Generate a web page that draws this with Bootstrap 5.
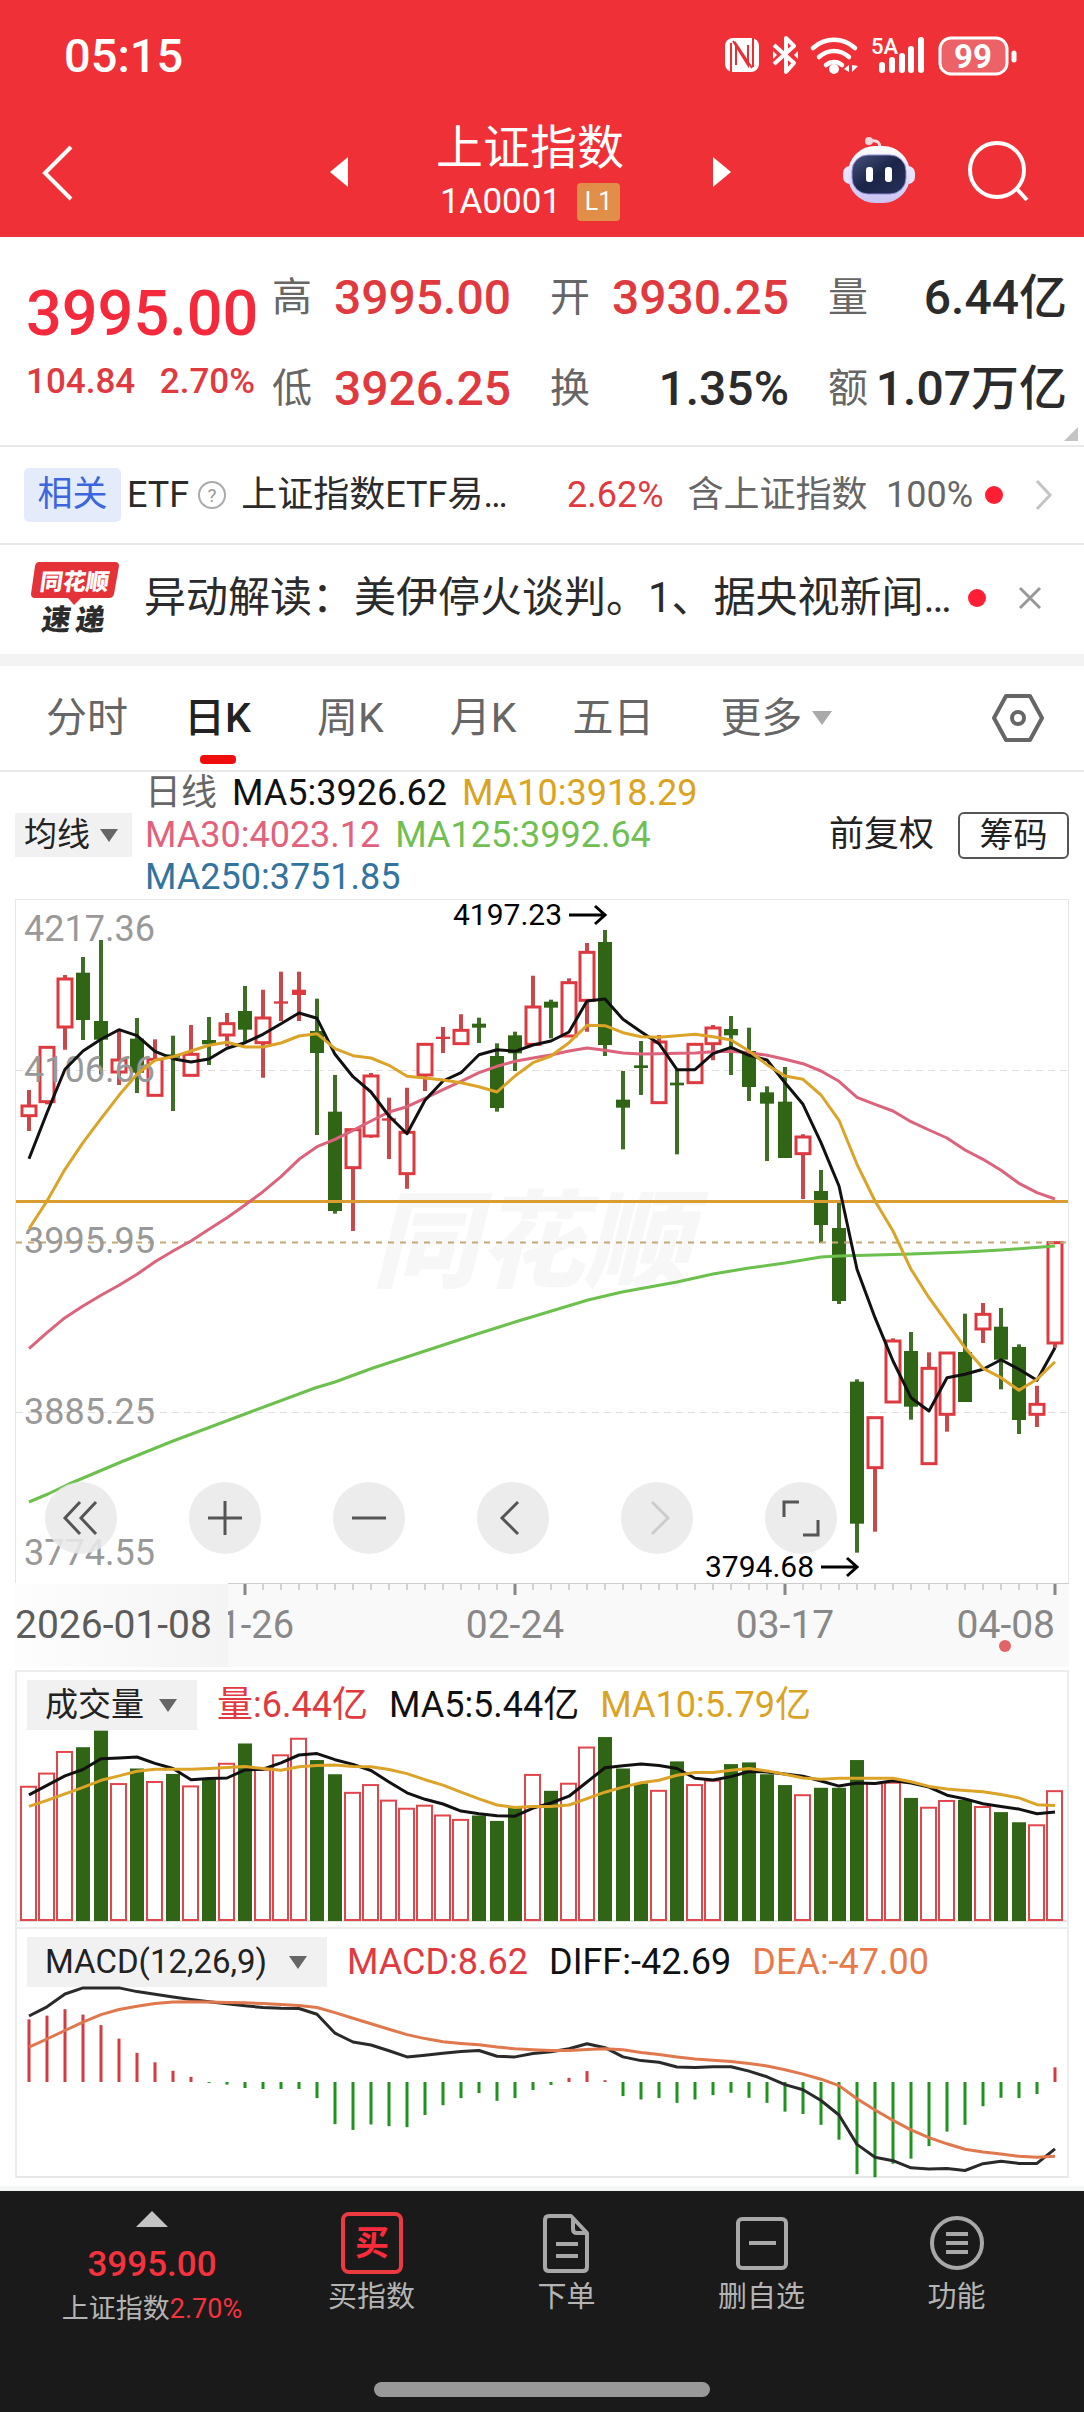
<!DOCTYPE html>
<html lang="zh-CN">
<head>
<meta charset="utf-8">
<meta name="viewport" content="width=device-width, initial-scale=1">
<title>上证指数 1A0001</title>
<link href="https://cdn.jsdelivr.net/npm/bootstrap@5.3.0/dist/css/bootstrap.min.css" rel="stylesheet">
<style>
:root{--up:#e03a40;--hot:#f03037;--ink:#2b2b2b;--soft:#666;--line:#e9e9e9}
body{font-family:Roboto,"Noto Sans CJK SC",sans-serif;color:var(--ink);background:#fff;font-size:36px;line-height:42px}
a{color:inherit;text-decoration:none}
button{font:inherit;color:inherit;background:none;border:0;padding:0}
svg{display:block;flex:none;overflow:visible}
.topbar{background:var(--hot);color:#fff}
.statusbar{height:110px;padding:2px 66px 0 64px}
.clock{font-size:47px;line-height:60px;font-weight:500}
.titlebar{padding:8px 54px 11px 30px}
.side{flex:1 1 0}
.robot{margin-right:52px}
.switcher{width:401px}
.title{font-size:47px;line-height:60px;font-weight:400;margin:0}
.code{font-size:35px;line-height:48px}
.level{background:#e08e48;font-size:25px;line-height:38px;width:43px;border-radius:4px}
.quote{padding:31px 17px 26px 26px;border-bottom:2px solid var(--line)}
.lead-price{width:246px;padding-top:16px}
.price{font-size:63px;line-height:60px;font-weight:500;color:#f5293c}
.delta{font-size:35px;line-height:40px;margin-top:18px;width:229px;font-weight:500}
.stats{flex:1;display:grid;grid-template-columns:repeat(3,1fr);gap:31px 39px;margin:0}
.stats dt{font-size:40px;line-height:60px;font-weight:400;color:var(--soft)}
.stats dd{font-size:48px;line-height:60px;font-weight:500;margin:0;white-space:nowrap}
.rise{color:var(--up)}
.corner{right:6px;bottom:4px}
.etf{height:98px;padding:0 31px 0 24px;border-bottom:2px solid var(--line)}
.tag{background:#e4ecfc;color:#3d66dd;font-size:35px;line-height:54px;width:97px;border-radius:5px;margin-right:6px}
.fund{margin-left:14px}
.dot{width:18px;height:18px;border-radius:50%;background:#ff1f35;flex:none}
.etf .dot{margin:0 32px 0 12px}
.news{height:121px;padding:0 42px 3px 31px;border-bottom:12px solid #f3f3f3}
.news p{font-size:42px;line-height:60px;margin:0 0 0 25px}
.tabs{height:106px;padding:0 40px 0 46px;border-bottom:2px solid var(--line);font-size:41px;line-height:104px;color:var(--soft)}
.tabs a{margin-right:66px;position:relative}
.tabs a.tight{margin-right:56px}
.tabs .active{color:#222;font-weight:500}
.tabs .active::after{content:"";position:absolute;left:16px;bottom:6px;width:36px;height:9px;border-radius:4px;background:#f00d0d}
.pick{appearance:none;border:0;color:#222;background:#f1f1f1 no-repeat url("data:image/svg+xml,%3Csvg xmlns='http://www.w3.org/2000/svg' width='18' height='13'%3E%3Cpath d='M0 0h18l-9 13z' fill='%23666'/%3E%3C/svg%3E");font-size:33px;outline-offset:2px}
.pick-ma{width:117px;height:44px;padding:0 0 0 9px;background-position:right 14px center;line-height:44px}
.pick-sub{height:50px;padding:0 0 0 18px;background-position:right 20px center;line-height:50px}
.w-vol{width:170px}.w-macd{width:300px}
.pick-more{background:no-repeat right center url("data:image/svg+xml,%3Csvg xmlns='http://www.w3.org/2000/svg' width='20' height='14'%3E%3Cpath d='M0 0h20l-10 14z' fill='%23aaa'/%3E%3C/svg%3E");color:var(--soft);font-size:41px;width:112px;padding:0;height:60px;line-height:60px}
.averages{padding:0 15px 1px;height:127px}
.legend{margin-left:13px}
.legend div,.sublegend{white-space:nowrap}
.legend div{display:flex;gap:15px}
.c-gray{color:#666}.c-black{color:#111}.c-gold{color:#dba322}.c-pink{color:#e2617c}.c-green{color:#6fbf53}.c-blue{color:#32749f}.c-orange{color:#e8794a}
.chips{border:2px solid #555;border-radius:6px;width:111px;height:47px;font-size:34px;line-height:42px;color:#222}
.adjust{font-size:35px;color:#222}
.chart{width:100%;height:auto}
.tools{left:45px;top:583px;gap:72px}
.tools button{width:72px;height:72px;border-radius:50%;background:rgba(233,233,233,.88)}
.panel{margin:0 15px;border:2px solid #ececec;border-bottom:0}
.panel-head{height:58px;padding-left:10px}
.sublegend{gap:21px;margin-left:20px;line-height:50px}
.gutter{border-bottom:5px solid #f3f4f4;height:13px}
.bottombar{background:#1a1a1a;color:#b4b4b4;padding:14px 30px 0;height:222px}
.bottombar a{width:195px;font-size:29px;line-height:40px}
.bottombar .brief{flex:1;font-size:27px;line-height:40px}
.brief b{font-size:35px;line-height:40px;font-weight:500}
.bright{color:#f5323d}
.homebar{width:336px;height:15px;border-radius:8px;background:#999}
</style>
<script src="https://cdn.jsdelivr.net/npm/bootstrap@5.3.0/dist/js/bootstrap.bundle.min.js"></script>
</head>
<body>
<header class="topbar">
  <div class="statusbar d-flex align-items-center justify-content-between">
    <span class="clock">05:15</span>
    <svg width="294" height="44" viewBox="724 35 294 44" fill="none" stroke="#fff" role="img" aria-label="NFC 蓝牙 WLAN 信号 电量 99">
      <rect x="725" y="39" width="34" height="34" rx="8" fill="#fff" stroke="none"/>
      <path d="M731 44v30M753 38v30" stroke="#e92f36" stroke-width="2"/><path d="M736 66V45l16 24M748 46v20L733 42" stroke="#e92f36" stroke-width="2"/>
      <path d="M774 46l20 18-8 9V39l8 8-20 18" stroke-width="4" stroke-linejoin="round"/><path d="M773 52v8l4-4zM798 52v8l-4-4z" fill="#fff" stroke="none"/>
      <path d="M813 49c12-11 30-11 42 0M819 58c9-8 21-8 30 0M826 66c5-4 11-4 16 0" stroke-width="4.500" stroke-linecap="round"/><circle cx="834" cy="70" r="5" fill="#fff" stroke="none"/>
      <path d="M849 66v7l-5-3zM852 66v7l6-6z" fill="#fff" stroke="none"/>
      <path d="M882 66v5M892 61v10M902 57v14M911 50v21M921 41v30" stroke-width="6" stroke-linecap="round"/>
      <text x="871" y="55" font-size="22" font-weight="500" fill="#fff" stroke="none">5A</text>
      <rect x="940" y="39" width="67" height="36" rx="11" fill="#ec6266" stroke-width="3"/>
      <path d="M1014 54v7" stroke-width="5" stroke-linecap="round"/>
      <text x="973" y="69" font-size="33" font-weight="700" text-anchor="middle" fill="#fff" stroke="none">99</text>
    </svg>
  </div>
  <nav class="titlebar d-flex align-items-center">
    <div class="side d-flex"><button type="button" aria-label="返回"><svg width="44" height="58" viewBox="0 0 44 58" fill="none" stroke="#fff" stroke-width="4"><path d="M41 4L15 30l26 26"/></svg></button></div>
    <div class="switcher d-flex align-items-center justify-content-between">
      <button type="button" aria-label="上一个"><svg width="18" height="30" viewBox="0 0 18 30"><path d="M18 0v30L0 15z" fill="#fff"/></svg></button>
      <div class="text-center">
        <h1 class="title">上证指数</h1>
        <div class="code d-flex align-items-center justify-content-center gap-3"><span>1A0001</span><span class="level">L1</span></div>
      </div>
      <button type="button" aria-label="下一个"><svg width="18" height="30" viewBox="0 0 18 30"><path d="M0 0v30l18-15z" fill="#fff"/></svg></button>
    </div>
    <div class="side d-flex justify-content-end align-items-center">
      <button type="button" aria-label="智能助手" class="robot"><svg width="74" height="70" viewBox="843 136 74 70"><defs><linearGradient id="hd" x2="0" y2="1"><stop offset="0" stop-color="#fff"/><stop offset="1" stop-color="#c9c2f4"/></linearGradient><linearGradient id="fc" x2="1" y2="1"><stop offset="0" stop-color="#47507c"/><stop offset=".5" stop-color="#1b2548"/><stop offset="1" stop-color="#27305a"/></linearGradient></defs><path d="M872 140c7-1 9 2 9 7" fill="none" stroke="#f6dfe4" stroke-width="3"/><circle cx="870" cy="140" r="4" fill="#f3d6dc"/><rect x="844" y="165" width="72" height="18" rx="7" fill="#e9e4fb"/><rect x="849" y="145" width="62" height="57" rx="27" fill="url(#hd)"/><rect x="853" y="154" width="54" height="39" rx="16" fill="url(#fc)" stroke="#8f8dd8"/><rect x="867" y="166" width="7" height="15" rx="3" fill="#fff"/><rect x="886" y="166" width="7" height="15" rx="3" fill="#fff"/></svg></button>
      <button type="button" aria-label="搜索"><svg width="62" height="62" viewBox="969 140 62 62" fill="none" stroke="#fff" stroke-width="4"><circle cx="998" cy="169" r="27"/><path d="M1017 187l11 12"/></svg></button>
    </div>
  </nav>
</header>

<main>
<section class="quote d-flex position-relative">
  <div class="lead-price rise">
    <div class="price">3995.00</div>
    <div class="delta d-flex justify-content-between"><span>104.84</span><span>2.70%</span></div>
  </div>
  <dl class="stats">
    <div class="d-flex justify-content-between"><dt>高</dt><dd class="rise">3995.00</dd></div>
    <div class="d-flex justify-content-between"><dt>开</dt><dd class="rise">3930.25</dd></div>
    <div class="d-flex justify-content-between"><dt>量</dt><dd>6.44亿</dd></div>
    <div class="d-flex justify-content-between"><dt>低</dt><dd class="rise">3926.25</dd></div>
    <div class="d-flex justify-content-between"><dt>换</dt><dd>1.35%</dd></div>
    <div class="d-flex justify-content-between"><dt>额</dt><dd>1.07万亿</dd></div>
  </dl>
  <svg class="corner position-absolute" width="14" height="14" viewBox="0 0 14 14"><path d="M14 0v14H0z" fill="#c4c4c4"/></svg>
</section>

<section class="etf d-flex align-items-center">
  <a href="#" class="tag text-center">相关</a>
  <span>ETF</span>
  <svg class="ms-2" width="30" height="30" viewBox="0 0 30 30"><circle cx="15" cy="15" r="13" fill="none" stroke="#aaa" stroke-width="2"/><text x="15" y="22" font-size="19" text-anchor="middle" fill="#999">?</text></svg>
  <a href="#" class="fund flex-grow-1">上证指数ETF易…</a>
  <span class="rise">2.62%</span>
  <span class="c-gray ms-4">含上证指数&ensp;100%</span>
  <span class="dot"></span>
  <svg width="18" height="32" viewBox="0 0 18 32" fill="none" stroke="#c4c4c4" stroke-width="3"><path d="M2 2l13 14L2 30"/></svg>
</section>

<section class="news d-flex align-items-center">
  <svg width="88" height="80" viewBox="31 558 88 80" role="img" aria-label="同花顺速递"><path d="M39 562h76q4 0 4 4l-5 28q-1 4-5 4H81l-7 7-6-7H35q-4 0-4-4l4-28q1-4 4-4z" fill="#e53238"/><g transform="skewX(-8)" font-weight="900"><text x="122" y="590" font-size="23" fill="#fff">同花顺</text><text x="129" y="630" font-size="29" fill="#2c2c2c">速</text><text x="163" y="630" font-size="29" fill="#2c2c2c">递</text></g></svg>
  <p class="flex-grow-1 text-nowrap">异动解读：美伊停火谈判。1、据央视新闻…</p>
  <span class="dot"></span>
  <button type="button" class="ms-4 ps-2" aria-label="关闭"><svg width="24" height="24" viewBox="0 0 24 24" stroke="#999" stroke-width="3"><path d="M2 2l20 20M22 2L2 22"/></svg></button>
</section>

<nav class="tabs d-flex align-items-center">
  <a href="#" class="tight">分时</a><a href="#" class="active">日K</a><a href="#">周K</a><a href="#" class="tight">月K</a><a href="#">五日</a>
  <select class="pick pick-more" aria-label="更多周期"><option>更多</option></select>
  <button type="button" class="ms-auto" aria-label="图表设置"><svg width="52" height="48" viewBox="0 0 52 48" fill="none" stroke="#666" stroke-width="4" stroke-linejoin="round"><path d="M14 2h24l12 22-12 22H14L2 24z"/><circle cx="26" cy="24" r="6"/></svg></button>
</nav>

<section class="averages d-flex align-items-center">
  <select class="pick pick-ma" aria-label="主图指标"><option>均线</option></select>
  <div class="legend">
    <div><span class="c-gray">日线</span><span class="c-black">MA5:3926.62</span><span class="c-gold">MA10:3918.29</span></div>
    <div><span class="c-pink">MA30:4023.12</span><span class="c-green">MA125:3992.64</span></div>
    <div><span class="c-blue">MA250:3751.85</span></div>
  </div>
  <span class="adjust ms-auto me-4">前复权</span>
  <button type="button" class="chips">筹码</button>
</section>

<section class="position-relative">
  <svg id="kline" class="chart" viewBox="0 898 1084 771"></svg>
  <div class="tools d-flex position-absolute">
    <button type="button" aria-label="最早"><svg width="72" height="72" viewBox="0 0 72 72" fill="none" stroke="#555" stroke-width="3"><path d="M35 20L20 36l15 16M51 20L36 36l15 16"/></svg></button>
    <button type="button" aria-label="放大"><svg width="72" height="72" viewBox="0 0 72 72" fill="none" stroke="#555" stroke-width="3"><path d="M19 36h34M36 19v34"/></svg></button>
    <button type="button" aria-label="缩小"><svg width="72" height="72" viewBox="0 0 72 72" fill="none" stroke="#555" stroke-width="3"><path d="M19 36h34"/></svg></button>
    <button type="button" aria-label="左移"><svg width="72" height="72" viewBox="0 0 72 72" fill="none" stroke="#555" stroke-width="3"><path d="M41 20L25 36l16 16"/></svg></button>
    <button type="button" aria-label="右移" disabled><svg width="72" height="72" viewBox="0 0 72 72" fill="none" stroke="#ccc" stroke-width="3"><path d="M31 20l16 16-16 16"/></svg></button>
    <button type="button" aria-label="全屏"><svg width="72" height="72" viewBox="0 0 72 72" fill="none" stroke="#555" stroke-width="3"><path d="M19 35V20h15M53 38v15H38"/></svg></button>
  </div>
</section>

<section class="panel">
  <div class="panel-head d-flex align-items-end">
    <select class="pick pick-sub w-vol" aria-label="成交量指标"><option>成交量</option></select>
    <div class="sublegend d-flex"><span class="rise">量:6.44亿</span><span class="c-black">MA5:5.44亿</span><span class="c-gold">MA10:5.79亿</span></div>
  </div>
  <svg id="volume" class="chart" viewBox="17 1729 1050 197"></svg>
</section>

<section class="panel">
  <div class="panel-head d-flex align-items-end">
    <select class="pick pick-sub w-macd" aria-label="副图指标"><option>MACD(12,26,9)</option></select>
    <div class="sublegend d-flex"><span class="rise">MACD:8.62</span><span class="c-black">DIFF:-42.69</span><span class="c-orange">DEA:-47.00</span></div>
  </div>
  <svg id="macd" class="chart" viewBox="17 1986 1050 191"></svg>
</section>
<div class="gutter"></div>
</main>

<footer class="bottombar d-flex flex-column justify-content-between">
  <nav class="d-flex">
    <a href="#" class="brief d-flex flex-column align-items-center"><svg class="mt-2" width="32" height="16" viewBox="0 2 32 16"><path d="M16 0l16 16H0z" fill="#c4c4c4"/></svg><b class="bright mt-3">3995.00</b><span class="mt-1">上证指数<span class="bright">2.70%</span></span></a>
    <a href="#" class="d-flex flex-column align-items-center"><svg width="76" height="72" viewBox="-2 0 76 72" fill="none"><rect x="7" y="9" width="58" height="58" rx="6" stroke="#ed3a40" stroke-width="4"/><text x="36" y="50" font-size="34" font-weight="700" text-anchor="middle" fill="#fb2b3b">买</text></svg>买指数</a>
    <a href="#" class="d-flex flex-column align-items-center"><svg width="76" height="72" viewBox="0 0 76 72" fill="none" stroke="#a8a8a8" stroke-width="4" stroke-linejoin="round"><path d="M20 11h22l16 17v34q0 4-4 4H20q-4 0-4-4V15q0-4 4-4zM44 12v12q0 4 4 4h10M27 39h22M27 51h22"/></svg>下单</a>
    <a href="#" class="d-flex flex-column align-items-center"><svg width="76" height="72" viewBox="0 0 76 72" fill="none" stroke="#a8a8a8" stroke-width="4"><rect x="14" y="14" width="48" height="49" rx="4"/><path d="M25 38h27"/></svg>删自选</a>
    <a href="#" class="d-flex flex-column align-items-center"><svg width="76" height="72" viewBox="0 0 76 72" fill="none" stroke="#a8a8a8" stroke-width="4"><circle cx="38" cy="38" r="25"/><path d="M27 29h22M27 38h22M27 47h22"/></svg>功能</a>
  </nav>
  <div class="homebar mx-auto mb-3"></div>
</footer>

<script>
// One trading day every 18 units; each series is stored as steps below a base line, STEP steps to a unit.
const X = i => 29 + 18 * i, UP = '#dc3a40', DOWN = '#2f6514';
const STEP = { 890: 3, 1660: 2.958 };
const Y = (base, v) => base + v / STEP[base];
const line = (base, vals, color, w = 3) =>
  `<polyline fill="none" stroke="${color}" stroke-width="${w}" stroke-linejoin="round" points="${vals.map((v, i) => X(i) + ',' + Y(base, v).toFixed(1)).join(' ')}"/>`;
const text = (x, y, s, size, fill, more = '') => `<text x="${x}" y="${y}" font-size="${size}" fill="${fill}" ${more}>${s}</text>`;

// [rising, high, body top, body bottom, low]
const days = [[1,597,645,674,720],[1,469,469,632,640],[1,252,264,408,476],[0,198,245,387,447],[0,147,390,446,550],[1,416,507,543,582],[0,381,443,545,606],[1,445,505,613,613],[0,434,490,500,660],[1,402,490,553,553],[0,378,447,460,522],[1,366,398,432,466],[0,285,360,416,455],[1,296,381,455,560],[1,242,331,338,390],[1,242,296,312,390],[0,323,420,486,732],[0,552,662,960,968],[1,716,716,830,1020],[1,546,555,735,740],[1,620,682,689,804],[1,590,724,848,893],[1,460,460,552,600],[1,408,437,444,486],[1,370,418,458,462],[0,380,398,410,456],[0,457,495,651,662],[0,422,433,487,540],[1,254,348,460,462],[0,326,332,350,442],[1,262,275,435,435],[1,156,184,328,422],[0,117,153,462,495],[0,540,626,650,775],[0,450,523,531,612],[1,432,453,635,635],[0,536,575,583,790],[1,460,460,575,575],[1,402,411,458,508],[0,375,414,433,552],[0,410,480,588,630],[0,586,604,638,810],[0,528,632,801,801],[1,730,738,788,924],[0,837,900,1002,1056],[0,928,1011,1230,1239],[0,1465,1472,1898,1985],[1,1580,1580,1730,1922],[1,1342,1350,1533,1533],[0,1323,1380,1547,1586],[1,1384,1432,1718,1718],[1,1386,1386,1570,1622],[0,1268,1383,1533,1533],[1,1236,1270,1314,1356],[0,1251,1307,1406,1495],[0,1360,1368,1587,1629],[1,1484,1540,1570,1608],[1,1053,1055,1356,1370]];
const ma5 = [803,665,535,480,445,416,434,481,503,513,504,472,455,430,398,366,382,490,557,603,675,728,628,570,545,491,476,481,462,450,423,330,324,385,422,458,536,536,488,469,493,507,575,640,755,885,1135,1280,1410,1520,1560,1460,1450,1435,1406,1435,1468,1370];
const ma10 = [1013,930,835,755,683,613,550,508,497,480,463,454,468,468,456,435,428,473,494,501,523,556,561,567,575,587,603,555,515,495,455,403,404,425,437,439,434,430,437,447,480,521,555,565,612,688,820,930,1020,1135,1220,1295,1370,1432,1460,1498,1465,1412];
const ma30 = [1373,1325,1280,1245,1213,1183,1150,1112,1080,1050,1015,980,942,902,857,805,767,745,718,690,663,647,622,596,571,545,526,511,501,492,480,471,478,486,489,488,487,486,482,481,485,493,505,518,540,571,619,640,660,692,717,741,777,805,838,877,905,924];
const ma125 = [[29,1501],[48,1493],[69,1483],[121,1461],[173,1440],[245,1413],[315,1387],[335,1381],[373,1367],[477,1333],[515,1321],[588,1299],[622,1291],[677,1281],[713,1273],[749,1267],[785,1262],[821,1256],[839,1255],[911,1253],[965,1251],[1001,1249],[1055,1245]];

let k = `<path d="M15.500 1582V898.500H1068.500V1582" fill="none" stroke="#e6e6e6"/>
<rect x="16" y="1583" width="1053" height="83" fill="#f9f9f9"/>
<text x="372" y="1278" font-size="106" font-weight="900" font-style="italic" fill="#f7f7f8">同花顺</text>
<path d="M16 1069.500H1068M16 1411.500H1068" stroke="#dedede" stroke-dasharray="7 5"/>`;
days.forEach(([up, h, t, b, l], i) => {
  const x = X(i), y = v => Y(890, v);
  if (up && b - t > 20) {
    k += `<path d="M${x} ${y(h)}V${y(t)}M${x} ${y(b)}V${y(l)}" stroke="#c8484c" stroke-width="4"/>
    <rect x="${x - 7}" y="${y(t)}" width="14" height="${(b - t) / 3}" fill="#fff" stroke="${UP}" stroke-width="3"/>`;
  } else {
    k += `<path d="M${x} ${y(h)}V${y(l)}" stroke="${up ? '#c8484c' : '#3f6f27'}" stroke-width="4"/>
    <rect x="${x - 7}" y="${y(t)}" width="14" height="${(b - t) / 3}" fill="${up ? UP : DOWN}"/>`;
  }
});
k += `<path d="M16 1241.500H1068" stroke="#c3a878" stroke-width="2" stroke-dasharray="6 6"/>
<path d="M16 1200.500H1068" stroke="#db9d30" stroke-width="3"/>`;
[['4217.36',940],['4106.66',1081],['3995.95',1252],['3885.25',1423],['3774.55',1564]].forEach(([s, y]) => k += text(24, y, s, 36, '#999'));
k += `<polyline fill="none" stroke="#6cc04d" stroke-width="3" stroke-linejoin="round" points="${ma125.join(' ')}"/>`;
k += line(890, ma30, '#dc637c') + line(890, ma5, '#111') + line(890, ma10, '#dba428');
k += text(453, 924, '4197.23', 30, '#000') + text(705, 1576, '3794.68', 30, '#000');
k += `<path d="M569 914h36M595 905l10 9-10 9M821 1566h36M847 1557l10 9-10 9" fill="none" stroke="#000" stroke-width="3"/>`;
k += `<path d="M228 1582.500H1069" stroke="#ccc"/>`;
for (let i = 12; i < 58; i++) {
  const major = (i - 12) % 15 === 0;
  k += `<path d="M${X(i)} 1583v${major ? 11 : 6}" stroke="${major ? '#888' : '#aaa'}" stroke-width="${major ? 3 : 1}"/>`;
}
k += text(294, 1637, '1-26', 38, '#888', 'text-anchor="end"') +
  `<defs><linearGradient id="fade"><stop offset="0" stop-color="#fdfdfd"/><stop offset="1" stop-color="#f4f4f4"/></linearGradient></defs>
  <rect x="15" y="1583" width="213" height="83" fill="url(#fade)"/>` +
  text(15, 1637, '2026-01-08', 39, '#5c5c5c') + text(515, 1637, '02-24', 39, '#888', 'text-anchor="middle"') +
  text(785, 1637, '03-17', 39, '#888', 'text-anchor="middle"') + text(1055, 1637, '04-08', 39, '#888', 'text-anchor="end"') +
  `<circle cx="1005" cy="1645" r="6" fill="#e06468"/>`;
document.getElementById('kline').innerHTML = k;

// volume: negative numbers mark falling days
const vols = [372,333,269,-255,-206,364,-318,358,-334,371,-350,304,-244,322,279,230,-293,-335,390,367,413,437,428,457,470,-457,-473,-430,337,-384,363,256,-225,-318,-362,384,-297,367,354,-305,-300,-335,-367,397,-375,-375,-293,362,360,-405,434,414,-411,432,-447,-477,486,385];
const v5 = [396,368,340,321,289,287,284,303,318,351,348,346,322,320,301,278,274,292,306,324,358,390,409,423,444,452,458,459,435,420,400,358,316,310,305,309,318,347,352,342,327,328,334,341,355,370,361,362,354,361,373,397,408,422,430,438,452,447];
const v10 = [430,412,393,374,353,340,326,320,320,320,318,315,312,318,323,313,309,308,312,313,321,333,351,367,388,408,426,433,430,430,426,407,388,373,360,353,338,330,330,323,318,325,335,346,350,347,347,347,347,357,371,379,383,387,395,405,425,427];
let v = '<path d="M17 1920H1067" stroke="#e3e3e3" stroke-width="2"/>';
vols.forEach((n, i) => {
  const top = Y(1660, Math.abs(n)), x = X(i);
  v += n > 0 ? `<rect x="${x - 8}" y="${top}" width="15" height="${1919 - top}" fill="#fff" stroke="#e0464b" stroke-width="2"/>`
             : `<rect x="${x - 7}" y="${top}" width="14" height="${1920 - top}" fill="${DOWN}"/>`;
});
v += line(1660, v5, '#111') + line(1660, v10, '#dba428', 3);
document.getElementById('volume').innerHTML = v;

const bars = [1060,1049,1030,1046,1077,1117,1159,1187,1212,1230,1248,1253,1263,1266,1266,1266,1293,1370,1387,1371,1376,1379,1343,1314,1293,1278,1301,1293,1269,1254,1233,1213,1240,1287,1297,1293,1307,1297,1284,1277,1292,1307,1333,1340,1372,1416,1518,1527,1487,1472,1435,1392,1372,1317,1292,1293,1281,1202];
const diff = [1050,1023,985,967,967,967,978,986,994,1001,1008,1014,1020,1025,1027,1028,1045,1101,1127,1136,1153,1171,1166,1160,1155,1152,1169,1171,1161,1156,1147,1132,1144,1171,1182,1187,1201,1202,1200,1200,1213,1230,1253,1268,1300,1343,1430,1468,1478,1499,1503,1501,1507,1487,1480,1486,1486,1443];
const dea = [1142,1118,1093,1068,1046,1031,1021,1013,1009,1008,1009,1010,1011,1013,1016,1019,1025,1040,1057,1073,1089,1105,1117,1126,1131,1135,1142,1147,1150,1152,1152,1149,1147,1150,1158,1164,1171,1177,1181,1185,1191,1198,1209,1222,1237,1256,1295,1328,1359,1387,1410,1428,1444,1452,1458,1465,1468,1465];
let m = '<path d="M17 2176H1067" stroke="#e6e6e6" stroke-width="2"/>';
bars.forEach((n, i) => m += `<path d="M${X(i)} 2081V${Y(1660, n)}" stroke="${n < 1245 ? '#d03d42' : '#1e931e'}" stroke-width="3"/>`);
m += line(1660, diff, '#2a2a2a') + line(1660, dea, '#e0784e', 3);
document.getElementById('macd').innerHTML = m;
</script>
</body>
</html>
